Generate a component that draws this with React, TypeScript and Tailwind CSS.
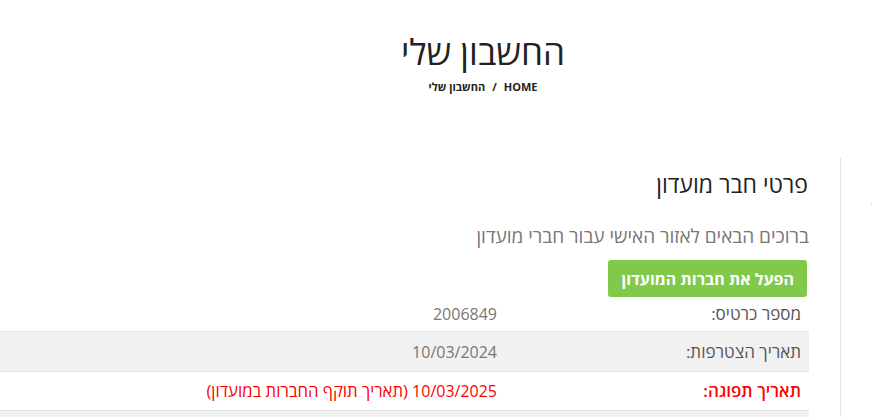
import React from "react";

export default function App() {
  const font = { fontFamily: '"Open Sans", "Noto Sans", sans-serif' };
  return (
    <div dir="rtl" className="w-[872px] h-[417px] overflow-hidden bg-white" style={font}>
      <div className="pl-[94px] pt-[29px] text-center">
        <h1 className="text-[35px] leading-[46px] text-[#222] font-normal">החשבון שלי</h1>
        <div className="mt-[4px] text-[11px] font-bold text-[#222] leading-[16px]">
          <span>HOME</span>
          <span className="mx-[7px]">/</span>
          <span>החשבון שלי</span>
        </div>
      </div>
      <div className="flex mt-[63px]">
        <div className="w-[32px] shrink-0 border-l border-[#e3e3e3] h-[300px] relative">
          <div className="absolute left-[30px] top-[46px] w-[1px] h-[1px] bg-[#bbb]" />
          <div className="absolute left-[31px] top-[221px] w-[1px] h-[60px] bg-[#e5e5e5]" />
        </div>
        <div className="w-[809px] mr-[31px] shrink-0">
          <h2 className="pr-[1px] pt-[12px] text-[23px] leading-[28px] text-[#222] font-normal">פרטי חבר מועדון</h2>
          <p className="mt-[25px] text-[19px] leading-[26px] text-[#777]">ברוכים הבאים לאזור האישי עבור חברי מועדון</p>
          <div className="mt-[11px] flex">
            <button className="mr-[2px] h-[37px] px-[13px] rounded-[3px] bg-[#81c94a] text-white font-bold text-[16px]">
              הפעל את חברות המועדון
            </button>
          </div>
          <div>
            <Row label="מספר כרטיס:" value="2006849" h="h-[35px]" />
            <Row label="תאריך הצטרפות:" value="10/03/2024" h="h-[40px]" bg />
            <Row
              label="תאריך תפוגה:"
              value={
                <>
                  10/03/2025 <span className="text-[16.7px]">(תאריך תוקף החברות במועדון)</span>
                </>
              }
              h="h-[39px]"
              red
            />
            <Row label="" value="" h="h-[39px]" bg />
          </div>
        </div>
      </div>
    </div>
  );
}

function Row({
  label,
  value,
  h,
  bg,
  red,
}: {
  label: string;
  value: React.ReactNode;
  h: string;
  bg?: boolean;
  red?: boolean;
}) {
  return (
    <div className={`flex items-center border-b border-[#e2e2e2] ${h} ${bg ? "bg-[#f1f1f1]" : "bg-white"}`}>
      <div className={`w-[304px] shrink-0 pr-[8px] text-[17px] ${red ? "text-[#ff0000] font-semibold" : "text-[#555]"}`}>{label}</div>
      <div className={`pr-[8px] text-[16px] ${red ? "text-[#ff0000]" : "text-[#777]"}`}>{value}</div>
    </div>
  );
}
